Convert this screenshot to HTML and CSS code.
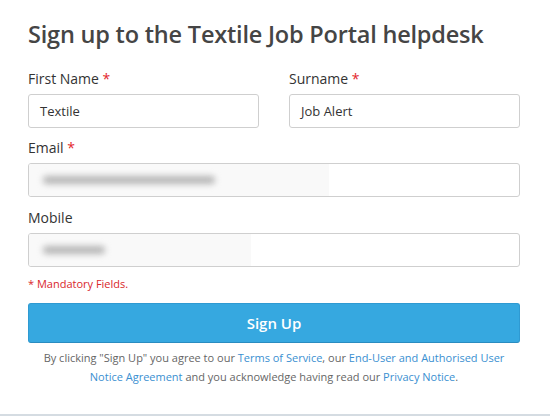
FILE: index.html
```html
<!DOCTYPE html>
<html lang="en">
<head>
<meta charset="utf-8">
<title>Sign up</title>
<link rel="stylesheet" href="styles.css">
</head>
<body>
<div class="page">
  <h1 class="title">Sign up to the Textile Job Portal helpdesk</h1>
  <div class="row">
    <div class="group">
      <div class="label">First Name <span class="req">*</span></div>
      <div class="input">Textile</div>
    </div>
    <div class="group">
      <div class="label">Surname <span class="req">*</span></div>
      <div class="input">Job Alert</div>
    </div>
  </div>
  <div class="group group-email">
    <div class="label">Email <span class="req">*</span></div>
    <div class="input masked"><span class="veil veil-email"><span class="smudge smudge-email"></span></span></div>
  </div>
  <div class="group group-last">
    <div class="label">Mobile</div>
    <div class="input masked"><span class="veil veil-mobile"><span class="smudge smudge-mobile"></span></span></div>
  </div>
  <div class="mandatory">* Mandatory Fields.</div>
  <button class="btn">Sign Up</button>
  <p class="legal">By clicking "Sign Up" you agree to our <a href="#">Terms of Service</a>, our <a href="#">End-User and Authorised User Notice Agreement</a> and you acknowledge having read our <a href="#">Privacy Notice</a>.</p>
</div>
<div class="rule"></div>
</body>
</html>
```
FILE: styles.css
```css
html, body {
  margin: 0;
  padding: 0;
  background: #fff;
}
body {
  font-family: "Open Sans", "Noto Sans", sans-serif;
  color: #333;
  width: 550px;
  height: 416px;
  overflow: hidden;
}
.page {
  padding: 19px 30px 0 28px;
}
.title {
  margin: 0 0 20px 0;
  font-size: 23.5px;
  line-height: 30px;
  font-weight: 600;
  color: #454545;
  letter-spacing: -0.2px;
  white-space: nowrap;
}
.row {
  display: grid;
  grid-template-columns: 1fr 1fr;
  column-gap: 30px;
}
.group {
  margin-bottom: 10px;
}
.group-email {
  margin-bottom: 11px;
}
.group-last {
  margin-bottom: 9px;
}
.label {
  font-size: 14px;
  line-height: 20px;
  margin-bottom: 5px;
  color: #333;
}
.req {
  color: #e3262b;
}
.input {
  box-sizing: border-box;
  height: 34px;
  border: 1px solid #cfcfcf;
  border-radius: 3px;
  padding: 0 11px;
  font-size: 13px;
  line-height: 32px;
  color: #333;
  position: relative;
  overflow: hidden;
}
.masked {
  padding: 0;
}
.veil {
  display: block;
  height: 100%;
  background: #f9f9f9;
  position: relative;
}
.veil-email { width: 300px; }
.veil-mobile { width: 222px; }
.smudge {
  position: absolute;
  top: 12px;
  left: 14px;
  height: 8px;
  border-radius: 4px;
  background: #b5b5b5;
  filter: blur(3px);
}
.smudge-email { width: 172px; }
.smudge-mobile { width: 62px; }
.mandatory {
  font-size: 11px;
  line-height: 16px;
  color: #d9262b;
  margin-bottom: 11px;
}
.btn {
  display: block;
  width: 100%;
  box-sizing: border-box;
  height: 40px;
  border: 1px solid #2f9ad2;
  border-bottom-color: #2a8cc0;
  border-radius: 3px;
  background: #36a8e0;
  color: #fff;
  font-family: inherit;
  font-size: 15px;
  font-weight: 600;
  padding: 0;
}
.legal {
  margin: 5px 0 0 0;
  font-size: 11px;
  line-height: 19px;
  text-align: center;
  color: #666;
}
.legal a {
  color: #3a8fd1;
  text-decoration: none;
}
.rule {
  position: absolute;
  left: 0;
  right: 0;
  top: 414px;
  height: 2px;
  background: #d5dce2;
}
```
